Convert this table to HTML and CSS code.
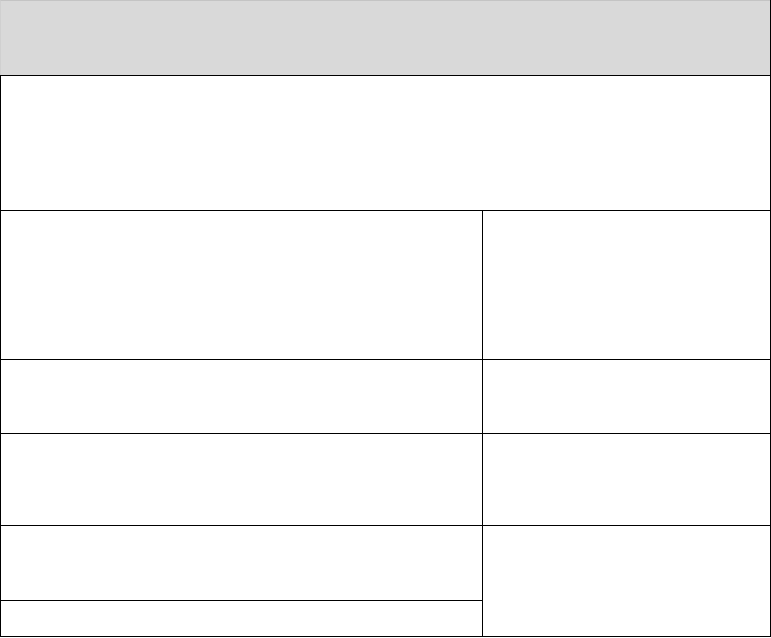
FILE: index.html
```html
<!DOCTYPE html>
<html lang="en">
<head>
<meta charset="utf-8">
<title>Table</title>
<link rel="stylesheet" href="styles.css">
</head>
<body>
<div class="sheet">
  <div class="cell head"></div>
  <div class="cell full"></div>
  <div class="cell"></div>
  <div class="cell"></div>
  <div class="cell"></div>
  <div class="cell"></div>
  <div class="cell"></div>
  <div class="cell"></div>
  <div class="cell"></div>
  <div class="cell tall"></div>
  <div class="cell"></div>
</div>
</body>
</html>
```
FILE: styles.css
```css
html, body {
  margin: 0;
  padding: 0;
  background: #ffffff;
  font-family: "Liberation Sans", Arial, sans-serif;
}
.sheet {
  width: 771px;
  box-sizing: border-box;
  display: grid;
  grid-template-columns: 481px 287px;
  grid-template-rows: 74px 134px 148px 73px 91px 74px 35px;
  gap: 1px;
  padding: 1px;
  background: #000000;
}
.cell {
  background: #ffffff;
}
.head {
  grid-column: 1 / 3;
  background: #d9d9d9;
  margin: -1px 0 0 -1px;
  border-top: 1px solid #c4c4c4;
  border-left: 1px solid #d0d0d0;
}
.full {
  grid-column: 1 / 3;
}
.tall {
  grid-row: span 2;
}
```
